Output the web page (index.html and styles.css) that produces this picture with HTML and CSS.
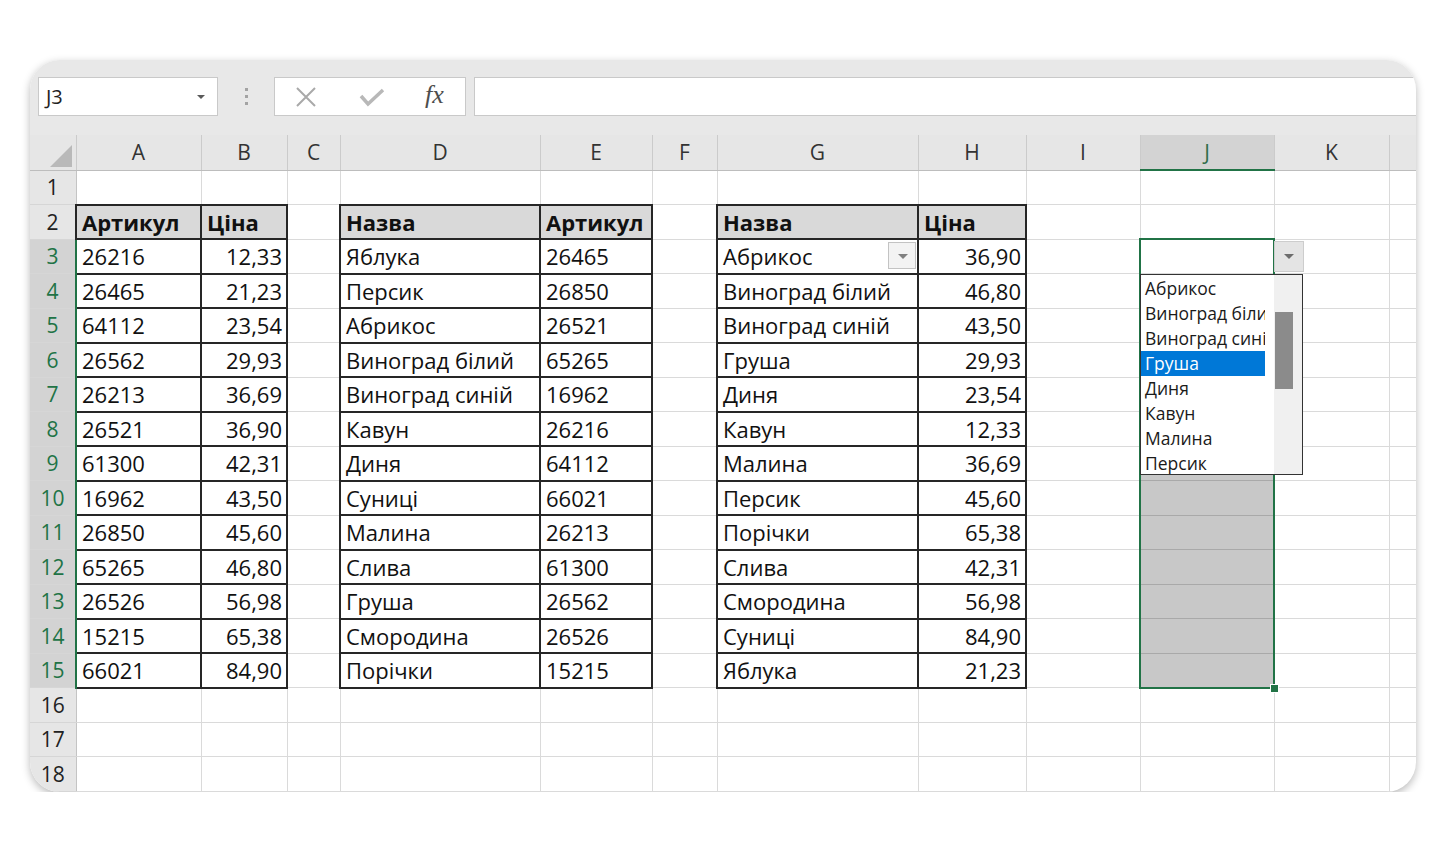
FILE: index.html
```html
<!DOCTYPE html>
<html lang="uk">
<head>
  <meta charset="UTF-8">
  <meta name="viewport" content="width=device-width, initial-scale=1.0">
  <title>Випадаючий список</title>
  <link rel="stylesheet" href="styles.css">
</head>
<body>
  <div class="window">
    <div class="toolbar">
      <div class="name-box"><span>J3</span><span class="caret"></span></div>
      <div class="grip"><i></i><i></i><i></i></div>
      <div class="fx-buttons">
        <svg class="btn-cancel" width="22" height="22" viewBox="0 0 22 22"><path d="M2 2 L20 20 M20 2 L2 20" stroke="#a9a9a9" stroke-width="2" fill="none"/></svg>
        <svg class="btn-enter" width="26" height="20" viewBox="0 0 26 20"><path d="M2 9 L9 17 L24 3" stroke="#b8b8b8" stroke-width="3.5" fill="none"/></svg>
        <span class="fx">fx</span>
      </div>
      <div class="formula"></div>
    </div>

    <table class="sheet">
      <colgroup>
        <col style="width:46px"><col style="width:125px"><col style="width:86px"><col style="width:53px">
        <col style="width:200px"><col style="width:112px"><col style="width:65px"><col style="width:201px">
        <col style="width:108px"><col style="width:114px"><col style="width:134px"><col style="width:115px">
        <col style="width:27px">
      </colgroup>
      <thead>
        <tr>
          <th class="corner"><svg width="46" height="33" viewBox="0 0 46 33"><polygon points="20,30 42,30 42,8" fill="#b9b9b9"/></svg></th>
          <th class="col">A</th><th class="col">B</th><th class="col">C</th><th class="col">D</th><th class="col">E</th>
          <th class="col">F</th><th class="col">G</th><th class="col">H</th><th class="col">I</th><th class="col on">J</th>
          <th class="col">K</th><th class="col"></th>
        </tr>
      </thead>
      <tbody>
        <tr><th class="row">1</th><td></td><td></td><td></td><td></td><td></td><td></td><td></td><td></td><td></td><td></td><td></td><td></td></tr>
        <tr><th class="row">2</th><td class="hd">Артикул</td><td class="hd">Ціна</td><td></td><td class="hd">Назва</td><td class="hd">Артикул</td><td></td><td class="hd">Назва</td><td class="hd">Ціна</td><td></td><td></td><td></td><td></td></tr>
        <tr class="picked">
          <th class="row">3</th><td class="b">26216</td><td class="b num">12,33</td><td></td><td class="b">Яблука</td><td class="b">26465</td><td></td>
          <td class="b combo">Абрикос<span class="cell-arrow"></span></td><td class="b num">36,90</td><td></td>
          <td class="active">
            <span class="cell-arrow list-arrow"></span>
            <div class="dropdown">
              <ul class="options">
                <li>Абрикос</li>
                <li>Виноград білий</li>
                <li>Виноград синій</li>
                <li class="current">Груша</li>
                <li>Диня</li>
                <li>Кавун</li>
                <li>Малина</li>
                <li>Персик</li>
              </ul>
              <div class="scroll"><div class="thumb"></div></div>
            </div>
          </td>
          <td></td><td></td>
        </tr>
        <tr class="picked"><th class="row">4</th><td class="b">26465</td><td class="b num">21,23</td><td></td><td class="b">Персик</td><td class="b">26850</td><td></td><td class="b">Виноград білий</td><td class="b num">46,80</td><td></td><td class="sel"></td><td></td><td></td></tr>
        <tr class="picked"><th class="row">5</th><td class="b">64112</td><td class="b num">23,54</td><td></td><td class="b">Абрикос</td><td class="b">26521</td><td></td><td class="b">Виноград синій</td><td class="b num">43,50</td><td></td><td class="sel"></td><td></td><td></td></tr>
        <tr class="picked"><th class="row">6</th><td class="b">26562</td><td class="b num">29,93</td><td></td><td class="b">Виноград білий</td><td class="b">65265</td><td></td><td class="b">Груша</td><td class="b num">29,93</td><td></td><td class="sel"></td><td></td><td></td></tr>
        <tr class="picked"><th class="row">7</th><td class="b">26213</td><td class="b num">36,69</td><td></td><td class="b">Виноград синій</td><td class="b">16962</td><td></td><td class="b">Диня</td><td class="b num">23,54</td><td></td><td class="sel"></td><td></td><td></td></tr>
        <tr class="picked"><th class="row">8</th><td class="b">26521</td><td class="b num">36,90</td><td></td><td class="b">Кавун</td><td class="b">26216</td><td></td><td class="b">Кавун</td><td class="b num">12,33</td><td></td><td class="sel"></td><td></td><td></td></tr>
        <tr class="picked"><th class="row">9</th><td class="b">61300</td><td class="b num">42,31</td><td></td><td class="b">Диня</td><td class="b">64112</td><td></td><td class="b">Малина</td><td class="b num">36,69</td><td></td><td class="sel"></td><td></td><td></td></tr>
        <tr class="picked"><th class="row">10</th><td class="b">16962</td><td class="b num">43,50</td><td></td><td class="b">Суниці</td><td class="b">66021</td><td></td><td class="b">Персик</td><td class="b num">45,60</td><td></td><td class="sel"></td><td></td><td></td></tr>
        <tr class="picked"><th class="row">11</th><td class="b">26850</td><td class="b num">45,60</td><td></td><td class="b">Малина</td><td class="b">26213</td><td></td><td class="b">Порічки</td><td class="b num">65,38</td><td></td><td class="sel"></td><td></td><td></td></tr>
        <tr class="picked"><th class="row">12</th><td class="b">65265</td><td class="b num">46,80</td><td></td><td class="b">Слива</td><td class="b">61300</td><td></td><td class="b">Слива</td><td class="b num">42,31</td><td></td><td class="sel"></td><td></td><td></td></tr>
        <tr class="picked"><th class="row">13</th><td class="b">26526</td><td class="b num">56,98</td><td></td><td class="b">Груша</td><td class="b">26562</td><td></td><td class="b">Смородина</td><td class="b num">56,98</td><td></td><td class="sel"></td><td></td><td></td></tr>
        <tr class="picked"><th class="row">14</th><td class="b">15215</td><td class="b num">65,38</td><td></td><td class="b">Смородина</td><td class="b">26526</td><td></td><td class="b">Суниці</td><td class="b num">84,90</td><td></td><td class="sel"></td><td></td><td></td></tr>
        <tr class="picked"><th class="row">15</th><td class="b">66021</td><td class="b num">84,90</td><td></td><td class="b">Порічки</td><td class="b">15215</td><td></td><td class="b">Яблука</td><td class="b num">21,23</td><td></td><td class="sel last"><span class="fill-handle"></span></td><td></td><td></td></tr>
        <tr><th class="row">16</th><td></td><td></td><td></td><td></td><td></td><td></td><td></td><td></td><td></td><td></td><td></td><td></td></tr>
        <tr><th class="row">17</th><td></td><td></td><td></td><td></td><td></td><td></td><td></td><td></td><td></td><td></td><td></td><td></td></tr>
        <tr><th class="row">18</th><td></td><td></td><td></td><td></td><td></td><td></td><td></td><td></td><td></td><td></td><td></td><td></td></tr>
      </tbody>
    </table>
  </div>
</body>
</html>
```

FILE: styles.css
```css
body {
  margin: 0;
  padding: 0;
  background-color: #ffffff;
  font-family: 'Open Sans', sans-serif;
  color: #111;
}

.window {
  margin: 60px 0 0 30px;
  width: 1386px;
  height: 732px;
  border-radius: 30px;
  overflow: hidden;
  background-color: #fff;
  box-shadow: 0 3px 9px rgba(0, 0, 0, 0.28);
}

/* formula bar */
.toolbar {
  height: 75px;
  box-sizing: border-box;
  padding: 17px 0 0 8px;
  background-color: #e8e8e8;
  display: flex;
  align-items: flex-start;
}

.name-box {
  width: 180px;
  height: 39px;
  box-sizing: border-box;
  border: 1px solid #c9c9c9;
  background-color: #fff;
  display: flex;
  align-items: center;
  justify-content: space-between;
  padding: 0 12px 0 7px;
  font-size: 20px;
  color: #222;
}

.caret {
  width: 0;
  height: 0;
  border-left: 4px solid transparent;
  border-right: 4px solid transparent;
  border-top: 4px solid #5a5a5a;
}

.grip {
  width: 56px;
  height: 39px;
  display: flex;
  flex-direction: column;
  align-items: center;
  justify-content: center;
  gap: 4px;
}

.grip i {
  width: 3px;
  height: 3px;
  background-color: #a3a3a3;
}

.fx-buttons {
  width: 192px;
  height: 39px;
  box-sizing: border-box;
  border: 1px solid #c9c9c9;
  background-color: #fff;
  display: flex;
  align-items: center;
  padding-left: 20px;
}

.btn-cancel {
  margin-right: 42px;
}

.btn-enter {
  margin-right: 40px;
}

.fx {
  font-family: 'Liberation Serif', serif;
  font-style: italic;
  font-size: 26px;
  color: #4d4d4d;
  margin-top: -3px;
}

.formula {
  flex: 1;
  height: 39px;
  margin-left: 8px;
  box-sizing: border-box;
  border: 1px solid #c9c9c9;
  border-right: none;
  background-color: #fff;
}

/* grid */
.sheet {
  border-collapse: collapse;
  table-layout: fixed;
  width: 1386px;
}

.sheet thead th {
  height: 34px;
  padding: 0;
  background-color: #e6e6e6;
  border-left: 1px solid #cbcbcb;
  border-bottom: 1px solid #bdbdbd;
  font-weight: normal;
  font-size: 21px;
  color: #333;
}

.sheet thead .corner {
  border-left: none;
  vertical-align: bottom;
}

.corner svg {
  display: block;
}

.sheet thead .col.on {
  background-color: #d3d3d3;
  color: #2f6d4a;
  border-bottom: 2px solid #217346;
}

.sheet tbody tr {
  height: 34.5px;
}

.sheet th.row {
  padding: 0;
  background-color: #e6e6e6;
  border-right: 1px solid #c4c4c4;
  border-bottom: 1px solid #d6d6d6;
  font-weight: normal;
  font-size: 21px;
  color: #222;
  text-align: center;
}

.picked th.row {
  background-color: #d3d3d3;
  color: #217346;
  border-right: 2px solid #217346;
}

.sheet td {
  padding: 0 4px 0 5px;
  border: 1px solid #dadada;
  font-size: 22px;
  white-space: nowrap;
  overflow: visible;
  line-height: 30px;
}

.sheet td.b {
  border: 2px solid #262626;
}

.sheet td.hd {
  border: 2px solid #262626;
  background-color: #d9d9d9;
  font-weight: bold;
}

.sheet td.num {
  text-align: right;
}

.combo,
.active {
  position: relative;
}

.cell-arrow {
  position: absolute;
  right: 1px;
  top: 2px;
  width: 28px;
  height: 27px;
  box-sizing: border-box;
  border: 1px solid #c3c3c3;
  background-color: #f3f3f3;
}

.cell-arrow::after {
  content: '';
  position: absolute;
  left: 9px;
  top: 11px;
  border-left: 5px solid transparent;
  border-right: 5px solid transparent;
  border-top: 5px solid #808080;
}

/* selected range J3:J15 */
.sheet td.active {
  border: 2px solid #217346;
  border-bottom: 1px solid #dadada;
}

.sheet td.sel {
  background-color: #c8c8c8;
  border-left: 2px solid #217346;
  border-right: 2px solid #217346;
  border-bottom: 1px solid #a9a9a9;
}

.sheet td.sel.last {
  border-bottom: 2px solid #217346;
  position: relative;
}

.fill-handle {
  position: absolute;
  right: -6px;
  bottom: -6px;
  width: 7px;
  height: 7px;
  background-color: #217346;
  border: 1px solid #fff;
}

.list-arrow {
  right: auto;
  left: calc(100% + 1px);
  top: 1px;
  width: 30px;
  height: 31px;
  background-color: #e4e4e4;
  border-color: #cdcdcd;
}

.list-arrow::after {
  left: 9px;
  top: 12px;
  border-top-color: #6c6c6c;
}

.dropdown {
  position: absolute;
  z-index: 2;
  left: -1px;
  top: calc(100% + 1px);
  width: 163px;
  height: 201px;
  box-sizing: border-box;
  border: 1px solid #333;
  background-color: #fff;
  display: flex;
}

.options {
  list-style-type: none;
  margin: 0;
  padding: 1px 0 0 0;
  width: 124px;
  overflow: hidden;
}

.options li {
  height: 25px;
  line-height: 24px;
  padding-left: 4px;
  font-size: 17.5px;
  color: #1a1a1a;
  overflow: hidden;
}

.options li.current {
  background-color: #0078d7;
  color: #fff;
}

.scroll {
  margin-left: 9px;
  flex: 1;
  background-color: #f0f0f0;
  position: relative;
}

.thumb {
  position: absolute;
  left: 1px;
  top: 37px;
  width: 18px;
  height: 77px;
  background-color: #8b8b8b;
}
```
